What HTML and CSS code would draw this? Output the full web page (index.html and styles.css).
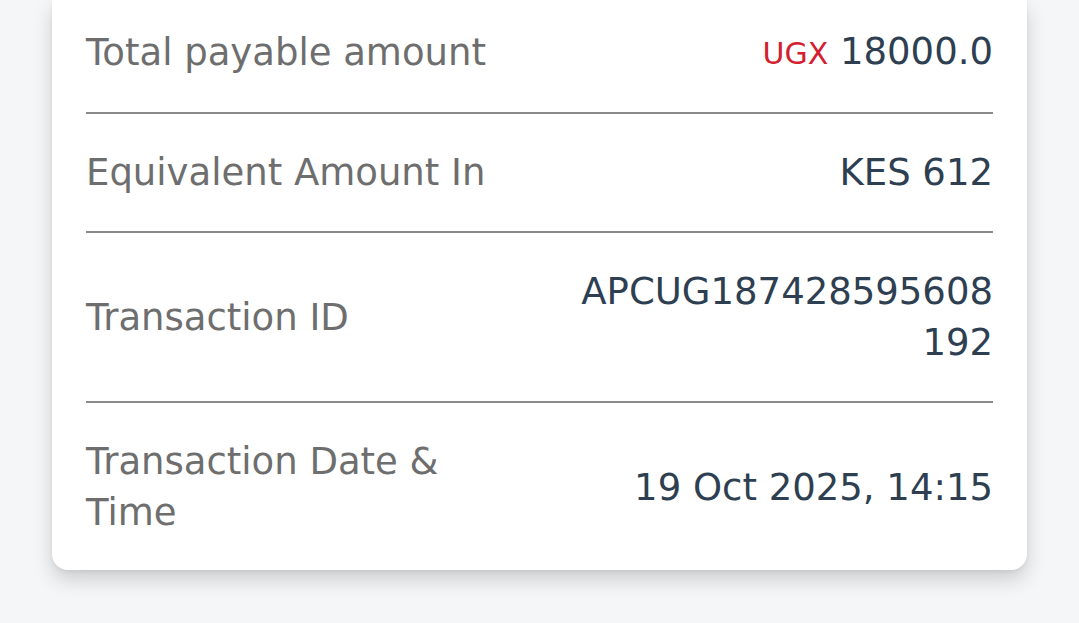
FILE: index.html
```html
<!DOCTYPE html>
<html lang="en">

<head>
    <meta charset="UTF-8">
    <meta name="viewport" content="width=device-width, initial-scale=1.0">
    <title>Payment Summary</title>
    <link rel="stylesheet" href="styles.css">
</head>

<body>
    <div class="summary-card">
        <div class="row">
            <div class="label">Total payable amount</div>
            <div class="value"><span class="currency">UGX</span> 18000.0</div>
        </div>
        <div class="row">
            <div class="label">Equivalent Amount In</div>
            <div class="value">KES 612</div>
        </div>
        <div class="row">
            <div class="label">Transaction ID</div>
            <div class="value break">APCUG187428595608192</div>
        </div>
        <div class="row">
            <div class="label">Transaction Date &amp; Time</div>
            <div class="value">19 Oct 2025, 14:15</div>
        </div>
    </div>
</body>

</html>
```

FILE: styles.css
```css
body {
    font-family: "DejaVu Sans", sans-serif;
    background-color: #f5f6f8;
    margin: 0;
    padding: 0 52px 60px 52px;
}

.summary-card {
    background-color: #fff;
    border-radius: 0 0 16px 16px;
    box-shadow: 0 10px 20px rgba(0, 0, 0, 0.16), 0 2px 4px rgba(0, 0, 0, 0.06);
    padding: 0 34px;
}

.row {
    display: grid;
    grid-template-columns: 1fr 1fr;
    align-items: center;
    gap: 60px;
    padding: 33px 0;
    border-bottom: 2px solid #8a8a8a;
    font-size: 37px;
    line-height: 51px;
}

.row:first-child {
    padding-top: 26px;
}

.row:last-child {
    border-bottom: none;
    padding-bottom: 32px;
}

.label {
    color: #6e6e6e;
}

.value {
    color: #2e3f52;
    text-align: right;
}

.value.break {
    word-break: break-all;
}

.currency {
    color: #d3202f;
    font-size: 30px;
}
```
